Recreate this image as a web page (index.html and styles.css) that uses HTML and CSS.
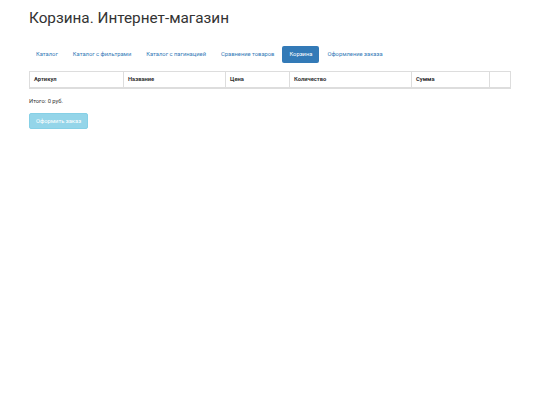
FILE: index.html
```html
<!DOCTYPE html>
<html lang="ru">
<head>
  <meta charset="UTF-8" />
  <title>Корзина. Интернет-магазин</title>
  <link rel="stylesheet" href="styles.css">
</head>
<body>
  <div class="container">
    <h1>Корзина. Интернет-магазин</h1>

    <!-- Navigation -->
    <ul class="nav-pills">
      <li><a href="#">Каталог</a></li>
      <li><a href="#">Каталог с фильтрами</a></li>
      <li><a href="#">Каталог с пагинацией</a></li>
      <li><a href="#">Сравнение товаров</a></li>
      <li class="active"><a href="#">Корзина</a></li>
      <li><a href="#">Оформление заказа</a></li>
    </ul>

    <!-- Cart table -->
    <table class="cart">
      <thead>
        <tr>
          <th class="col-sku">Артикул</th>
          <th class="col-name">Название</th>
          <th class="col-price">Цена</th>
          <th class="col-qty">Количество</th>
          <th class="col-sum">Сумма</th>
          <th class="col-del"></th>
        </tr>
      </thead>
      <tbody></tbody>
    </table>

    <p class="total">Итого: 0 руб.</p>
    <button class="btn-info" disabled>Оформить заказ</button>
  </div>
</body>
</html>
```

FILE: styles.css
```css
* { box-sizing: border-box; margin: 0; padding: 0; }
body { font-family: Roboto, sans-serif; color: #333; background: #fff; }

.container { width: 482px; margin: 0 auto; padding-top: 8px; }
h1 { font-weight: 400; font-size: 15.3px; line-height: 20px; color: #333; }

/* ===== Nav pills ===== */
.nav-pills { display: flex; list-style: none; margin-top: 18px; gap: 1px; }
.nav-pills a { display: block; padding: 4px 7px; font-size: 5.8px; line-height: 9px; color: #337ab7; text-decoration: none; border-radius: 2px; }
.nav-pills .active a { background: #337ab7; color: #fff; }

/* ===== Table ===== */
.cart { width: 100%; margin-top: 8px; border-collapse: collapse; border: 1px solid #ddd; }
.cart th { text-align: left; font-size: 5.8px; font-weight: 700; padding: 4px; line-height: 7px; border: 1px solid #ddd; border-bottom-width: 2px; }
.col-sku { width: 94px; }
.col-name { width: 102px; }
.col-price { width: 64px; }
.col-qty { width: 122px; }
.col-sum { width: 78px; }

.total { font-size: 5.8px; margin-top: 8px; line-height: 9px; }
.btn-info { margin-top: 7px; background: #5bc0de; color: #fff; border: 1px solid #46b8da; border-radius: 2px; padding: 3px 6px; font-family: inherit; font-size: 5.8px; line-height: 8px; opacity: 0.65; }
```
